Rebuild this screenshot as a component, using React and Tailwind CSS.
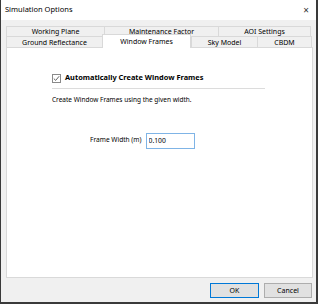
import React, { useState } from 'react';

const font = { fontFamily: '"Noto Sans", "Open Sans", sans-serif' };

function Tab({ label, width, active, tall }) {
  return (
    <div
      className={
        'flex items-center justify-center border-t border-l border-r border-[#d9d9d9] text-[7px] leading-none text-black ' +
        (active
          ? 'bg-white h-[14px] -mt-[2px] relative z-10'
          : tall
          ? 'bg-[#f0f0f0] h-[12px] -mr-px'
          : 'bg-[#f0f0f0] h-[11px] -mr-px')
      }
      style={{ width }}
    >
      <span className="-mt-px">{label}</span>
    </div>
  );
}

export default function App() {
  const [checked, setChecked] = useState(true);
  const [frameWidth, setFrameWidth] = useState('0.100');

  return (
    <div
      className="w-[318px] h-[304px] bg-[#f0f0f0] flex flex-col border-l border-r-2 border-b-2 border-[#3a3a3a] overflow-hidden"
      style={font}
    >
      <div className="h-[20px] bg-white flex items-center justify-between pl-[4px] pr-[7px] text-[7.5px] text-black">
        <span>Simulation Options</span>
        <span className="text-[10px] text-[#333] leading-none">×</span>
      </div>

      <div className="flex flex-col pl-[5px] pr-[4px] pt-[6px]">
        <div className="flex">
          <Tab label="Working Plane" width={99} />
          <Tab label="Maintenance Factor" width={115} />
          <Tab label="AOI Settings" width={93} />
        </div>
        <div className="flex items-end -mt-px">
          <Tab label="Ground Reflectance" width={97} tall />
          <Tab label="Window Frames" width={89} active />
          <Tab label="Sky Model" width={67} tall />
          <Tab label="CBDM" width={55} tall />
        </div>

        <div className="h-[231px] w-[307px] bg-white border border-[#d9d9d9] -mt-px pl-[45px] pt-[25px]">
          <div className="w-[213px]">
            <label className="flex items-center gap-[4px] h-[10px]">
              <span
                onClick={() => setChecked(!checked)}
                className="w-[9px] h-[9px] border border-[#8a8a8a] bg-white flex items-center justify-center"
              >
                {checked && (
                  <svg width="7" height="7" viewBox="0 0 7 7">
                    <path d="M0.8 3.6 L2.7 5.4 L6.2 1.2" fill="none" stroke="#555" strokeWidth="0.9" />
                  </svg>
                )}
              </span>
              <span className="text-[7.4px] font-bold text-black leading-none">Automatically Create Window Frames</span>
            </label>
            <div className="mt-[5px] border-t border-[#dcdcdc]" />
            <div className="mt-[8px] text-[6.5px] text-black leading-none">Create Window Frames using the given width.</div>
          </div>

          <div className="mt-[29px] pl-[38px] flex items-center gap-[4px]">
            <span className="text-[6.6px] text-black leading-none">Frame Width (m)</span>
            <input
              value={frameWidth}
              onChange={(e) => setFrameWidth(e.target.value)}
              className="w-[49px] h-[16px] border border-[#7fb4e6] px-[2px] text-[6.8px] text-black outline-none leading-none"
              style={font}
            />
          </div>
        </div>

        <div className="flex justify-end gap-[5px] mt-[5px]">
          <button className="w-[49px] h-[15px] bg-[#e1e1e1] border border-[#0078d7] text-[7px] text-black leading-none">
            OK
          </button>
          <button className="w-[48px] h-[15px] bg-[#e1e1e1] border border-[#adadad] text-[7px] text-black leading-none">
            Cancel
          </button>
        </div>
      </div>
    </div>
  );
}
